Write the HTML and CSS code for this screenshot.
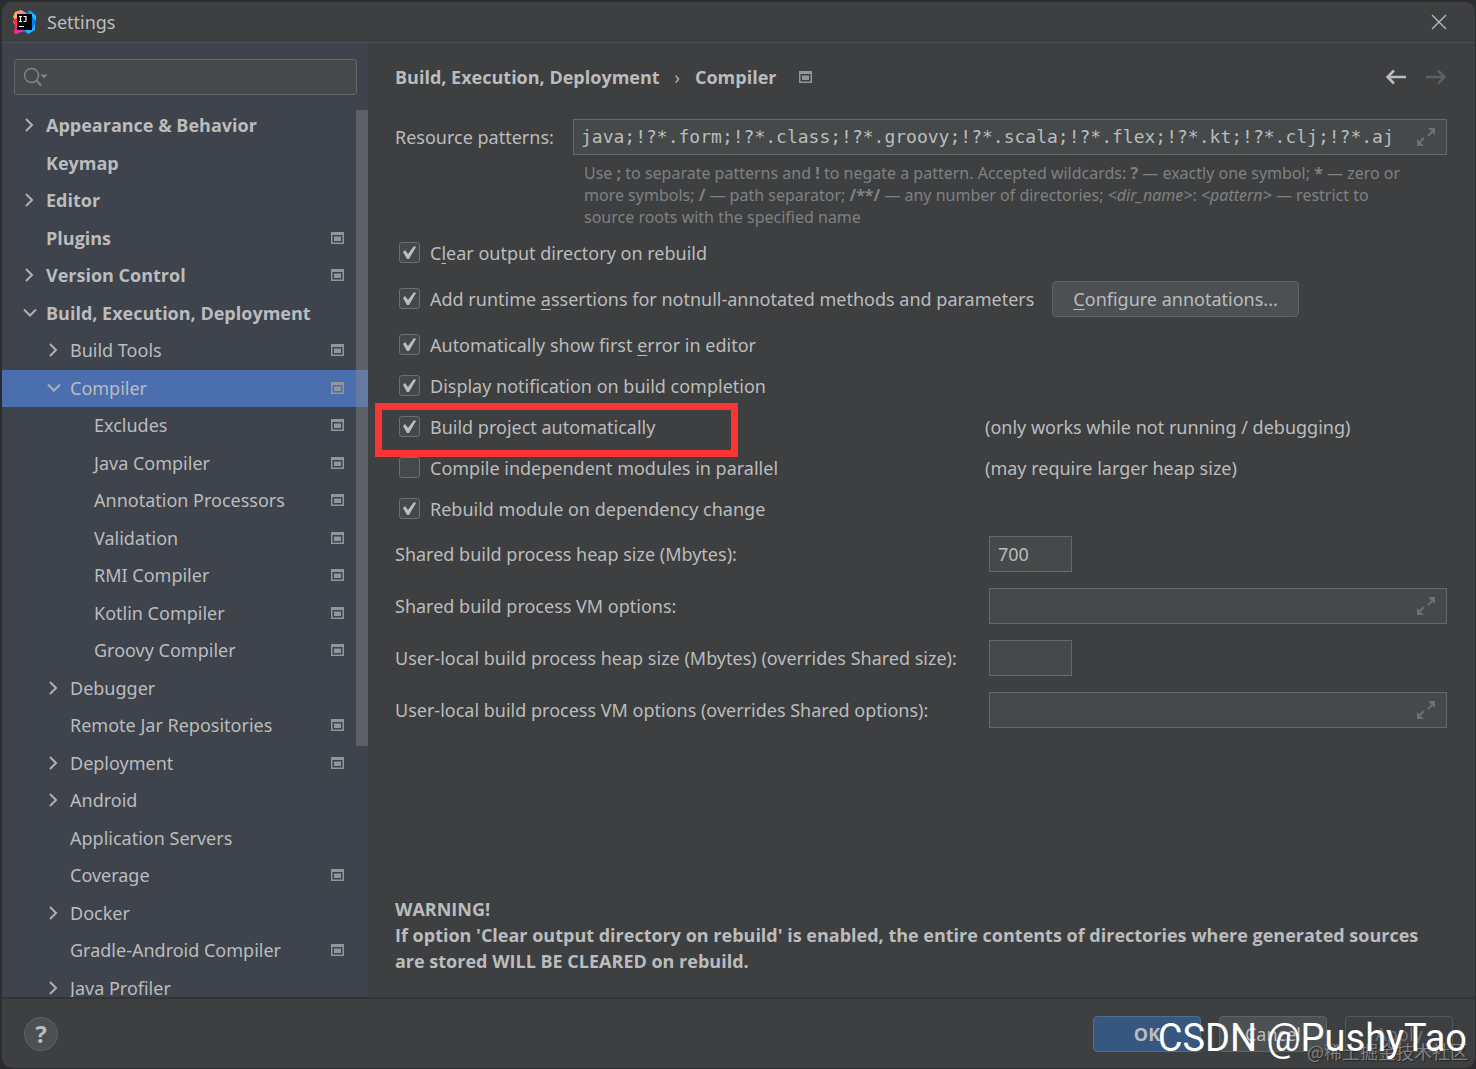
FILE: index.html
```
<!DOCTYPE html>
<html lang="en">

<head>
    <meta charset="UTF-8">
    <meta name="viewport" content="width=device-width, initial-scale=1.0">
    <title>Settings</title>
    <link rel="stylesheet" href="styles.css">
</head>

<body>
    <!-- shared icons -->
    <svg class="sprite" width="0" height="0" aria-hidden="true">
        <symbol id="right" viewBox="0 0 16 16">
            <path d="M4 2l6 6-6 6" fill="none" stroke="currentColor" stroke-width="2" />
        </symbol>
        <symbol id="down" viewBox="0 0 16 16">
            <path d="M2 4.500l6 6 6-6" fill="none" stroke="currentColor" stroke-width="2" />
        </symbol>
        <symbol id="module" viewBox="0 0 13 12">
            <path d="M0 0h13v12H0zM1.500 3v7.500h10V3z" fill="currentColor" fill-rule="evenodd" />
            <path d="M3 4.500h7v4.500H3z" fill="currentColor" />
        </symbol>
        <symbol id="expand" viewBox="0 0 20 20">
            <path d="M12 1h7v7l-2.300-2.300-4 4-1.400-1.400 4-4zM1 12l2.300 2.300 4-4 1.400 1.400-4 4L8 19H1z" fill="currentColor" />
        </symbol>
    </svg>

    <div class="window">
        <header class="titlebar">
            <svg class="logo" viewBox="0 0 24 24" aria-hidden="true">
                <path d="M2 2l6-2 5 3-3 9-8 3-2-3 2-2-2-3z" fill="#fcb04e" />
                <path d="M0 10l7-4 3 12-6 6-3-1 1-8z" fill="#fe2857" />
                <path d="M5 2l6 0 3 4-8 5z" fill="#f97aa8" />
                <path d="M3 16l8 3 4 1-9 3-4 1z" fill="#e0349a" />
                <path d="M13 3l4-3 6 5-1 14-7 5-6-4 6-4z" fill="#087cfa" />
                <path d="M16 1l7 5 0 5-5-6z" fill="#21c8f6" />
                <path d="M12 20l7-1 3-5 0 6-7 4z" fill="#20b5f5" />
                <path d="M4 4h15v16H4z" fill="#000" />
                <path d="M6 6.500h3M7.500 6.500v5M6 11.500h3M10.500 6.500h2.500v4q0 1-1 1h-1.500M6 16.500h5" fill="none" stroke="#fff" stroke-width="1.200" />
            </svg>
            <h1>Settings</h1>
            <button class="icon-button close" aria-label="Close">
                <svg viewBox="0 0 16 16"><path d="M1 1l14 14M15 1L1 15" fill="none" stroke="currentColor" stroke-width="1.300" /></svg>
            </button>
        </header>

        <div class="content">
            <aside class="sidebar">
                <div class="search">
                    <svg viewBox="0 0 26 20" aria-hidden="true">
                        <circle cx="8.500" cy="8.500" r="7" fill="none" stroke="currentColor" stroke-width="1.500" />
                        <path d="M13 13l5 5.500" stroke="currentColor" stroke-width="2" />
                        <path d="M17.500 7.500h7l-3.500 4z" fill="currentColor" />
                    </svg>
                    <input type="text" aria-label="Search settings">
                </div>
                <nav>
                    <ul class="tree">
                        <li><a class="top" href="#"><svg class="arrow"><use href="#right" /></svg>Appearance &amp; Behavior</a></li>
                        <li><a class="top leaf" href="#">Keymap</a></li>
                        <li><a class="top" href="#"><svg class="arrow"><use href="#right" /></svg>Editor</a></li>
                        <li><a class="top leaf" href="#">Plugins<svg class="module"><use href="#module" /></svg></a></li>
                        <li><a class="top" href="#"><svg class="arrow"><use href="#right" /></svg>Version Control<svg class="module"><use href="#module" /></svg></a></li>
                        <li><a class="top" href="#"><svg class="arrow"><use href="#down" /></svg>Build, Execution, Deployment</a></li>
                        <li><a class="sub" href="#"><svg class="arrow"><use href="#right" /></svg>Build Tools<svg class="module"><use href="#module" /></svg></a></li>
                        <li><a class="sub selected" href="#"><svg class="arrow"><use href="#down" /></svg>Compiler<svg class="module"><use href="#module" /></svg></a></li>
                        <li><a class="sub deep" href="#">Excludes<svg class="module"><use href="#module" /></svg></a></li>
                        <li><a class="sub deep" href="#">Java Compiler<svg class="module"><use href="#module" /></svg></a></li>
                        <li><a class="sub deep" href="#">Annotation Processors<svg class="module"><use href="#module" /></svg></a></li>
                        <li><a class="sub deep" href="#">Validation<svg class="module"><use href="#module" /></svg></a></li>
                        <li><a class="sub deep" href="#">RMI Compiler<svg class="module"><use href="#module" /></svg></a></li>
                        <li><a class="sub deep" href="#">Kotlin Compiler<svg class="module"><use href="#module" /></svg></a></li>
                        <li><a class="sub deep" href="#">Groovy Compiler<svg class="module"><use href="#module" /></svg></a></li>
                        <li><a class="sub" href="#"><svg class="arrow"><use href="#right" /></svg>Debugger</a></li>
                        <li><a class="sub leaf" href="#">Remote Jar Repositories<svg class="module"><use href="#module" /></svg></a></li>
                        <li><a class="sub" href="#"><svg class="arrow"><use href="#right" /></svg>Deployment<svg class="module"><use href="#module" /></svg></a></li>
                        <li><a class="sub" href="#"><svg class="arrow"><use href="#right" /></svg>Android</a></li>
                        <li><a class="sub leaf" href="#">Application Servers</a></li>
                        <li><a class="sub leaf" href="#">Coverage<svg class="module"><use href="#module" /></svg></a></li>
                        <li><a class="sub" href="#"><svg class="arrow"><use href="#right" /></svg>Docker</a></li>
                        <li><a class="sub leaf" href="#">Gradle-Android Compiler<svg class="module"><use href="#module" /></svg></a></li>
                        <li><a class="sub" href="#"><svg class="arrow"><use href="#right" /></svg>Java Profiler</a></li>
                    </ul>
                </nav>
                <div class="scrollbar"></div>
            </aside>

            <main>
                <div class="breadcrumb">
                    <span>Build, Execution, Deployment</span>
                    <span class="separator">›</span>
                    <h2>Compiler</h2>
                    <svg class="module"><use href="#module" /></svg>
                    <div class="history">
                        <button class="icon-button" aria-label="Back">
                            <svg viewBox="0 0 20 16"><path d="M20 8H2M8 1.500L1.500 8 8 14.500" fill="none" stroke="currentColor" stroke-width="2.600" /></svg>
                        </button>
                        <button class="icon-button" aria-label="Forward" disabled>
                            <svg viewBox="0 0 20 16"><path d="M0 8h18M12 1.500L18.500 8 12 14.500" fill="none" stroke="currentColor" stroke-width="2.600" /></svg>
                        </button>
                    </div>
                </div>

                <div class="patterns">
                    <label for="patterns">Resource patterns:</label>
                    <div class="field">
                        <input class="mono" type="text" id="patterns" value="java;!?*.form;!?*.class;!?*.groovy;!?*.scala;!?*.flex;!?*.kt;!?*.clj;!?*.aj">
                        <svg class="expand"><use href="#expand" /></svg>
                    </div>
                </div>
                <p class="hint">Use <b>;</b> to separate patterns and <b>!</b> to negate a pattern. Accepted wildcards: <b>?</b> — exactly one symbol; <b>*</b> — zero or<br>more symbols; <b>/</b> — path separator; <b>/**/</b> — any number of directories; <i>&lt;dir_name&gt;</i>: <i>&lt;pattern&gt;</i> — restrict to<br>source roots with the specified name</p>

                <div class="options">
                    <div class="option">
                        <label><input type="checkbox" checked><span>C<u>l</u>ear output directory on rebuild</span></label>
                    </div>
                    <div class="option with-button">
                        <label><input type="checkbox" checked><span>Add runtime <u>a</u>ssertions for notnull-annotated methods and parameters</span></label>
                        <button class="button"><u>C</u>onfigure annotations...</button>
                    </div>
                    <div class="option">
                        <label><input type="checkbox" checked><span>Automatically show first <u>e</u>rror in editor</span></label>
                    </div>
                    <div class="option">
                        <label><input type="checkbox" checked><span>Display notification on build completion</span></label>
                    </div>
                    <div class="option marked">
                        <label><input type="checkbox" checked><span>Build project automatically</span></label>
                        <span>(only works while not running / debugging)</span>
                    </div>
                    <div class="option">
                        <label><input type="checkbox"><span>Compile independent modules in parallel</span></label>
                        <span>(may require larger heap size)</span>
                    </div>
                    <div class="option">
                        <label><input type="checkbox" checked><span>Rebuild module on dependency change</span></label>
                    </div>
                </div>

                <div class="build">
                    <label for="sharedHeap">Shared build process heap size (Mbytes):</label>
                    <div class="field small"><input type="text" id="sharedHeap" value="700"></div>

                    <label for="sharedVm">Shared build process VM options:</label>
                    <div class="field"><input type="text" id="sharedVm"><svg class="expand"><use href="#expand" /></svg></div>

                    <label for="userHeap">User-local build process heap size (Mbytes) (overrides Shared size):</label>
                    <div class="field small"><input type="text" id="userHeap"></div>

                    <label for="userVm">User-local build process VM options (overrides Shared options):</label>
                    <div class="field"><input type="text" id="userVm"><svg class="expand"><use href="#expand" /></svg></div>
                </div>

                <p class="warning">WARNING!<br>If option 'Clear output directory on rebuild' is enabled, the entire contents of directories where generated sources<br>are stored WILL BE CLEARED on rebuild.</p>
            </main>
        </div>

        <footer>
            <button class="help" aria-label="Help">?</button>
            <button class="button primary">OK</button>
            <button class="button">Cancel</button>
            <button class="button" disabled>Apply</button>
        </footer>
    </div>

    <div class="community">@稀土掘金技术社区</div>
    <div class="credit">CSDN @PushyTao</div>
</body>

</html>
```
FILE: styles.css
```
* {
    box-sizing: border-box;
}

body {
    margin: 0;
    height: 100vh;
    padding: 2px 1px 1px 2px;
    position: relative;
    overflow: hidden;
    background-color: #2b2c2d;
    color: #bbbcbd;
    font-family: "Noto Sans", "Open Sans", sans-serif;
    font-size: 18px;
    line-height: 26px;
}

h1,
h2,
p,
ul {
    margin: 0;
    padding: 0;
    font-size: 18px;
}

h1 {
    font-weight: normal;
}

a {
    color: inherit;
    text-decoration: none;
}

input,
button {
    font: inherit;
    color: inherit;
}

u {
    text-underline-offset: 3px;
}

.sprite {
    position: absolute;
}

.window {
    height: 100%;
    display: flex;
    flex-direction: column;
    background-color: #3e3f40;
    border-radius: 10px;
    overflow: hidden;
}

/* title bar */
.titlebar {
    height: 41px;
    flex: none;
    display: flex;
    align-items: center;
    gap: 10px;
    padding: 0 28px 1px 11px;
    border-bottom: 1px solid #4d5051;
}

.logo {
    width: 24px;
    height: 24px;
}

.icon-button {
    display: flex;
    padding: 0;
    border: 0;
    background: none;
}

.close {
    margin-left: auto;
}

.close svg {
    width: 16px;
    height: 16px;
}

.content {
    flex: 1;
    min-height: 0;
    display: flex;
}

/* sidebar */
.sidebar {
    width: 366px;
    flex: none;
    position: relative;
    overflow: hidden;
    background-color: #3e434c;
}

.search {
    height: 36px;
    margin: 16px 11px 12px 12px;
    padding: 0 8px;
    display: flex;
    align-items: center;
    border: 1px solid #646869;
    border-radius: 3px;
    background-color: #45494a;
}

.search svg {
    width: 26px;
    height: 20px;
    flex: none;
    color: #7f8485;
}

.search input {
    flex: 1;
    min-width: 0;
    border: 0;
    outline: 0;
    background: none;
}

.tree {
    list-style: none;
}

.tree a {
    height: 37px;
    display: flex;
    align-items: center;
    padding-right: 24px;
    padding-bottom: 2px;
}

.tree li:nth-child(odd) a {
    height: 38px;
}

.tree .top {
    padding-left: 20px;
}

.tree .sub {
    padding-left: 44px;
}

.tree .top.leaf {
    padding-left: 44px;
}

.tree .sub.leaf {
    padding-left: 68px;
}

.tree .deep {
    padding-left: 92px;
}

.tree .selected {
    background-color: #4b6eaf;
}

.arrow {
    width: 16px;
    height: 16px;
    margin-right: 8px;
    color: #aeb1b4;
}

.module {
    width: 13px;
    height: 12px;
    color: #8f979d;
}

.tree .module {
    margin-left: auto;
}

/* lies over the tree rows */
.scrollbar {
    position: absolute;
    top: 67px;
    right: 0;
    width: 12px;
    height: 636px;
    background-color: rgba(140, 140, 140, 0.4);
}

/* main panel */
main {
    flex: 1;
    min-width: 0;
    display: flex;
    flex-direction: column;
    padding: 16px 28px 23px 27px;
}

.breadcrumb {
    height: 36px;
    margin-bottom: 24px;
    display: flex;
    align-items: center;
    gap: 15px;
}

.top,
.breadcrumb,
.warning,
.primary {
    font-family: "Open Sans", "Noto Sans", sans-serif;
    font-weight: bold;
}

.separator {
    font-weight: normal;
}

.breadcrumb .module {
    margin-left: 8px;
}

.history {
    margin-left: auto;
    display: flex;
    gap: 20px;
    padding-right: 1px;
}

.history svg {
    width: 20px;
    height: 16px;
}

.history button:disabled {
    color: #5d5f60;
}

.patterns {
    display: grid;
    grid-template-columns: 178px 1fr;
    align-items: center;
}

.field {
    height: 36px;
    display: flex;
    align-items: center;
    border: 1px solid #646869;
    background-color: #45494a;
}

.field.small {
    width: 83px;
}

.field input {
    flex: 1;
    min-width: 0;
    padding: 0 8px;
    border: 0;
    outline: 0;
    background: none;
}

.field .mono {
    padding-left: 7px;
    font-family: "DejaVu Sans Mono", monospace;
}

.expand {
    width: 20px;
    height: 20px;
    margin-right: 10px;
    flex: none;
    color: #6c7172;
}

.hint {
    margin: 7px 0 4px 189px;
    font-size: 16px;
    line-height: 22px;
    color: #7f8182;
}

.option {
    height: 41px;
    display: grid;
    grid-template-columns: 590px 1fr;
    align-items: center;
}

.option label {
    display: flex;
    align-items: center;
    gap: 10px;
    padding-left: 4px;
}

.option.with-button {
    margin: 5px 0;
    display: flex;
    gap: 18px;
}

/* red frame round the option */
.marked {
    position: relative;
}

.marked::after {
    content: "";
    box-sizing: border-box;
    position: absolute;
    left: -20px;
    top: -3px;
    width: 363px;
    height: 54px;
    border: 7px solid #fd3434;
    z-index: 1;
}

input[type="checkbox"] {
    appearance: none;
    width: 21px;
    height: 21px;
    margin: 0;
    flex: none;
    border: 1px solid #6b6f70;
    border-radius: 3px;
    background-color: #43494a;
}

input[type="checkbox"]:checked::before {
    content: "";
    display: block;
    width: 19px;
    height: 19px;
    background-color: #bbbcbd;
    clip-path: polygon(3px 9px, 5px 7px, 8px 11px, 14px 3px, 16px 4px, 9px 16px, 7px 16px);
}

.button {
    min-width: 108px;
    height: 36px;
    padding: 0 20px;
    border: 1px solid #5e6364;
    border-radius: 4px;
    background-color: #4c5052;
}

.button.primary {
    border-color: #4c708c;
    background-color: #365880;
}

.button:disabled {
    background-color: transparent;
    border-color: #55585a;
    color: #6f7172;
}

.build {
    margin-top: 7px;
    display: grid;
    grid-template-columns: 594px 1fr;
    gap: 16px 0;
    align-items: center;
}

.warning {
    margin-top: auto;
}

/* footer */
footer {
    height: 71px;
    flex: none;
    display: flex;
    align-items: center;
    gap: 18px;
    padding: 0 22px;
    border-top: 2px solid #323435;
}

.help {
    width: 34px;
    height: 34px;
    margin-right: auto;
    padding: 0;
    border: 1px solid #5e6364;
    border-radius: 50%;
    background-color: #4c5052;
    font-size: 24px;
    font-weight: bold;
}

/* watermarks over the footer */
.credit {
    position: absolute;
    right: 9px;
    bottom: 9px;
    color: #ffffff;
    font-family: Roboto, sans-serif;
    font-size: 38px;
    line-height: 44px;
}

.community {
    position: absolute;
    right: 8px;
    bottom: 5px;
    color: #808182;
    font-family: "Noto Sans CJK SC", sans-serif;
    text-shadow: 1px 1px 1px #222222;
}
```
